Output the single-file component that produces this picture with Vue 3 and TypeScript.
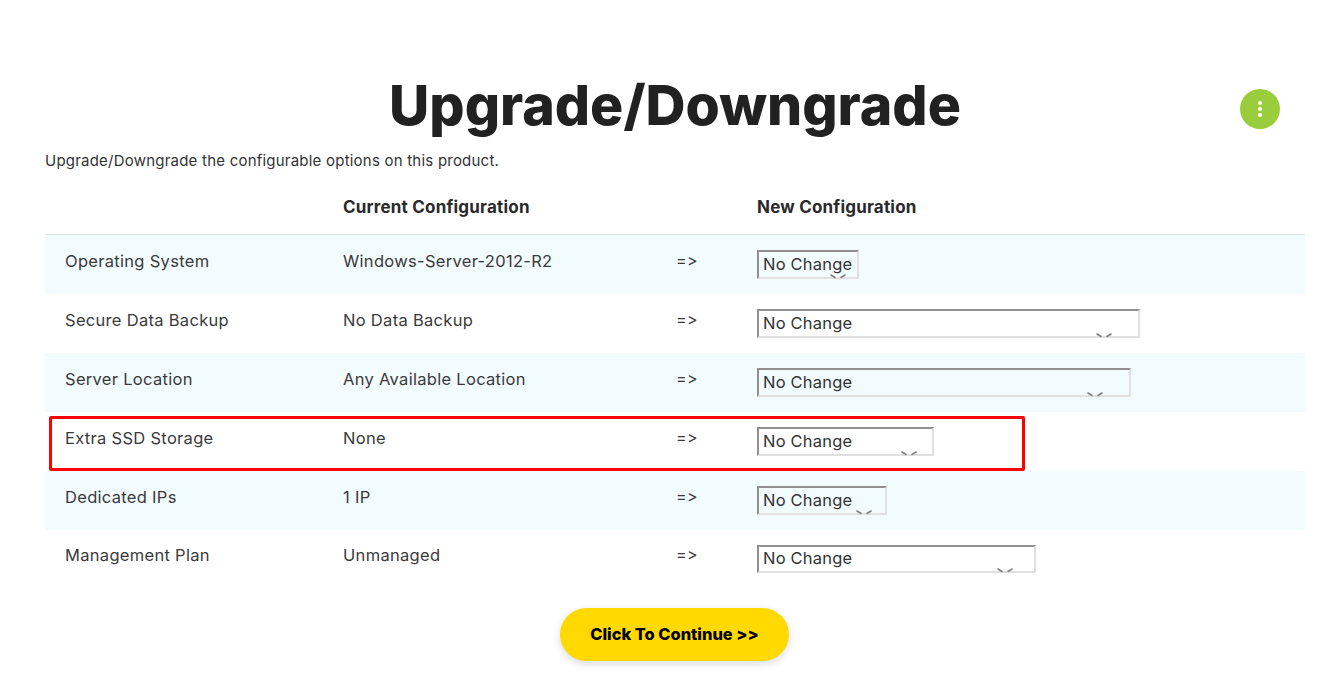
<template>
  <div class="page">
    <button class="fab" aria-label="More options">
      <span></span><span></span><span></span>
    </button>

    <h1 class="title">Upgrade/Downgrade</h1>
    <p class="intro">Upgrade/Downgrade the configurable options on this product.</p>

    <div class="table-wrap">
      <table class="options">
        <thead>
          <tr>
            <th></th>
            <th>Current Configuration</th>
            <th></th>
            <th>New Configuration</th>
          </tr>
        </thead>
        <tbody>
          <tr v-for="row in rows" :key="row.name">
            <td>{{ row.name }}</td>
            <td>{{ row.current }}</td>
            <td>=&gt;</td>
            <td>
              <div class="select-box" :style="{ width: row.selectWidth + 'px' }">
                <select>
                  <option>No Change</option>
                </select>
                <svg class="chevron" width="16" height="5" viewBox="0 0 16 5" aria-hidden="true">
                  <path d="M0.5 0.8 L5.5 3.8 M15.5 0.8 L10.5 3.8" fill="none" stroke="#808080" stroke-width="1.6" />
                </svg>
              </div>
            </td>
          </tr>
        </tbody>
      </table>
      <!-- annotation drawn over the fourth row -->
      <div class="highlight"></div>
    </div>

    <div class="actions">
      <button class="continue">Click To Continue &gt;&gt;</button>
    </div>
  </div>
</template>

<script setup lang="ts">
interface OptionRow {
  name: string
  current: string
  selectWidth: number
}

const rows: OptionRow[] = [
  { name: 'Operating System', current: 'Windows-Server-2012-R2', selectWidth: 102 },
  { name: 'Secure Data Backup', current: 'No Data Backup', selectWidth: 383 },
  { name: 'Server Location', current: 'Any Available Location', selectWidth: 374 },
  { name: 'Extra SSD Storage', current: 'None', selectWidth: 177 },
  { name: 'Dedicated IPs', current: '1 IP', selectWidth: 130 },
  { name: 'Management Plan', current: 'Unmanaged', selectWidth: 279 }
]
</script>

<style>
html,
body {
  background: #fff;
}
</style>

<style scoped>
.page {
  position: relative;
  height: 684px;
  box-sizing: border-box;
  padding: 66px 32px 0 45px;
  overflow: hidden;
  font-family: Inter, "Noto Sans", sans-serif;
  font-variant-ligatures: none;
  font-feature-settings: "calt" 0;
  color: #333;
}

.fab {
  position: absolute;
  top: 89px;
  left: 1240px;
  width: 40px;
  height: 40px;
  padding: 0;
  border: none;
  border-radius: 50%;
  background: #9acd3c;
  display: flex;
  flex-direction: column;
  align-items: center;
  justify-content: center;
  gap: 2px;
}

.fab span {
  width: 4px;
  height: 4px;
  border-radius: 50%;
  background: #fff;
}

.title {
  margin: 0;
  height: 78px;
  line-height: 78px;
  text-align: center;
  font-size: 55.4px;
  font-weight: 800;
  color: #212121;
}

.intro {
  margin: 7px 0 0;
  height: 20px;
  line-height: 20px;
  font-size: 15px;
  letter-spacing: 0.22px;
}

.table-wrap {
  position: relative;
  margin-top: 15px;
}

.options {
  width: 1260px;
  border-collapse: separate;
  border-spacing: 0;
  table-layout: fixed;
  font-size: 16.5px;
}

.options th,
.options td {
  box-sizing: border-box;
}

.options th:nth-child(1),
.options td:nth-child(1) {
  width: 278px;
}

.options th:nth-child(2),
.options td:nth-child(2) {
  width: 333px;
}

.options th:nth-child(3),
.options td:nth-child(3) {
  width: 82px;
}

.options th {
  height: 49px;
  padding: 0 0 7px 20px;
  text-align: left;
  font-weight: 700;
  font-size: 17px;
  letter-spacing: 0.2px;
  color: #2a2a2a;
  border-bottom: 1px solid #dee2e6;
}

.options th:nth-child(4) {
  padding-left: 19px;
}

.options td {
  height: 59px;
  padding: 15px 0 0 20px;
  vertical-align: top;
  line-height: 22px;
  color: #3a3a3a;
  letter-spacing: 0.3px;
}

.options tbody tr:nth-child(odd) td {
  background: #f2fbfe;
}

.options td:nth-child(3) {
  letter-spacing: 0.4px;
  font-size: 16px;
  line-height: 20px;
}

.options td:nth-child(4) {
  padding-left: 19px;
}

.options tbody tr:last-child td {
  height: 58px;
  padding-top: 14px;
}

.options tbody tr:last-child .select-box {
  height: 28px;
  margin-top: 1px;
}

.options tbody tr:last-child select {
  padding-bottom: 2px;
}

.select-box {
  position: relative;
  height: 29px;
}

.select-box select {
  display: block;
  width: 100%;
  height: 100%;
  box-sizing: border-box;
  margin: 0;
  padding: 0 0 1px 4px;
  appearance: none;
  border-style: solid;
  border-width: 2px;
  border-color: #909090 #e0e0e0 #e0e0e0 #909090;
  border-radius: 0;
  background: transparent;
  font-family: inherit;
  font-size: 16.5px;
  letter-spacing: 0.2px;
  color: #333;
}

.chevron {
  position: absolute;
  bottom: 0;
  right: calc(5.4% + 7.6px);
}

.highlight {
  position: absolute;
  left: 4px;
  top: 230px;
  width: 976px;
  height: 55px;
  box-sizing: border-box;
  border: 3px solid #ff0000;
  border-radius: 2px;
  pointer-events: none;
}

.actions {
  display: flex;
  justify-content: center;
  margin-top: 20px;
  padding-right: 1px;
}

.continue {
  width: 229px;
  height: 53px;
  padding: 0 0 2px;
  border: none;
  border-radius: 27px;
  background: #ffd900;
  box-shadow: 0 3px 8px rgba(0, 0, 0, 0.14);
  font-family: inherit;
  font-size: 16.4px;
  font-weight: 800;
  color: #000;
}
</style>
